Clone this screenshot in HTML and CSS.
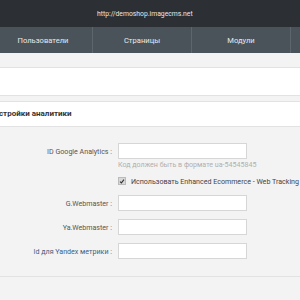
FILE: index.html
```html
<!DOCTYPE html>
<html lang="ru">
<head>
  <meta charset="UTF-8">
  <meta name="viewport" content="width=device-width, initial-scale=1.0">
  <title>Настройки аналитики</title>
  <link rel="stylesheet" href="styles.css">
</head>
<body>
  <div class="topbar">
    <span class="site-url">http://demoshop.imagecms.net</span>
  </div>
  <div class="nav">
    <span class="nav-item">Пользователи</span>
    <span class="nav-item">Страницы</span>
    <span class="nav-item">Модули</span>
    <span class="nav-item"></span>
  </div>

  <div class="toolbar"></div>

  <div class="panel">
    <div class="panel-title">Настройки аналитики</div>
    <div class="form">
      <label class="form-label">ID Google Analytics :</label>
      <div class="form-control">
        <input class="text-input" type="text">
        <div class="hint">Код должен быть в формате ua-54545845</div>
        <div class="check-row">
          <span class="check">
            <svg width="7" height="7" viewBox="0 0 7 7"><path d="M1.2 3.6 L2.8 5.2 L5.8 1.4" fill="none" stroke="#333" stroke-width="1.3"/></svg>
          </span>
          <span>Использовать Enhanced Ecommerce - Web Tracking</span>
        </div>
      </div>

      <label class="form-label">G.Webmaster :</label>
      <div class="form-control"><input class="text-input" type="text"></div>

      <label class="form-label">Ya.Webmaster :</label>
      <div class="form-control"><input class="text-input" type="text"></div>

      <label class="form-label label-link">Id для Yandex метрики :</label>
      <div class="form-control"><input class="text-input" type="text"></div>
    </div>
  </div>
</body>
</html>
```

FILE: styles.css
```css
body{
  margin: 0;
  background: #f3f3f3;
  font-family: Roboto, "Liberation Sans", sans-serif;
  color: #555;
  overflow: hidden;
}

.topbar{
  height: 27px;
  background: #2c2f33;
  display: flex;
  align-items: center;
  padding-left: 97px;
}
.topbar .site-url{
  font-size: 6.8px;
  color: #e8e8e8;
}

.nav{
  display: flex;
  height: 26px;
  margin-left: -6px;
  background: #4b535a;
}
.nav .nav-item{
  flex: 0 0 98px;
  border-right: 1px solid #5e666d;
  display: flex;
  align-items: center;
  justify-content: center;
  font-size: 7.6px;
  color: #e6e9ec;
}

.toolbar{
  height: 27px;
  margin-top: 14px;
  background: #fff;
  border-top: 1px solid #e2e2e2;
  border-bottom: 1px solid #e2e2e2;
}

.panel{
  margin-top: 5px;
  border-top: 1px solid #e2e2e2;
  border-bottom: 1px solid #e2e2e2;
}
.panel .panel-title{
  height: 24px;
  line-height: 24px;
  background: #fff;
  border-bottom: 1px solid #e2e2e2;
  margin-left: -11px;
  font-size: 8px;
  font-weight: bold;
  color: #333;
}

.form{
  display: grid;
  grid-template-columns: 112px 129px;
  column-gap: 6px;
  row-gap: 8px;
  padding: 16px 0 17px;
}
.form .form-label{
  height: 16px;
  line-height: 17px;
  text-align: right;
  font-size: 7.1px;
  color: #555;
  white-space: nowrap;
}
.form .label-link{
  color: #3f5f82;
}
.form .form-control{
  font-size: 7.1px;
  white-space: nowrap;
}
.form .text-input{
  display: block;
  box-sizing: border-box;
  width: 129px;
  height: 16px;
  margin: 0;
  border: 1px solid #d6d6d6;
  background: #fff;
}
.form .hint{
  margin-top: 1px;
  line-height: 10px;
  color: #b0b0b0;
}
.form .check-row{
  display: flex;
  align-items: center;
  gap: 5px;
  margin-top: 5px;
  height: 12px;
  color: #444;
}
.form .check{
  display: flex;
  align-items: center;
  justify-content: center;
  width: 6px;
  height: 6px;
  background: #d8d8d8;
  border: 1px solid #bbb;
}
```
